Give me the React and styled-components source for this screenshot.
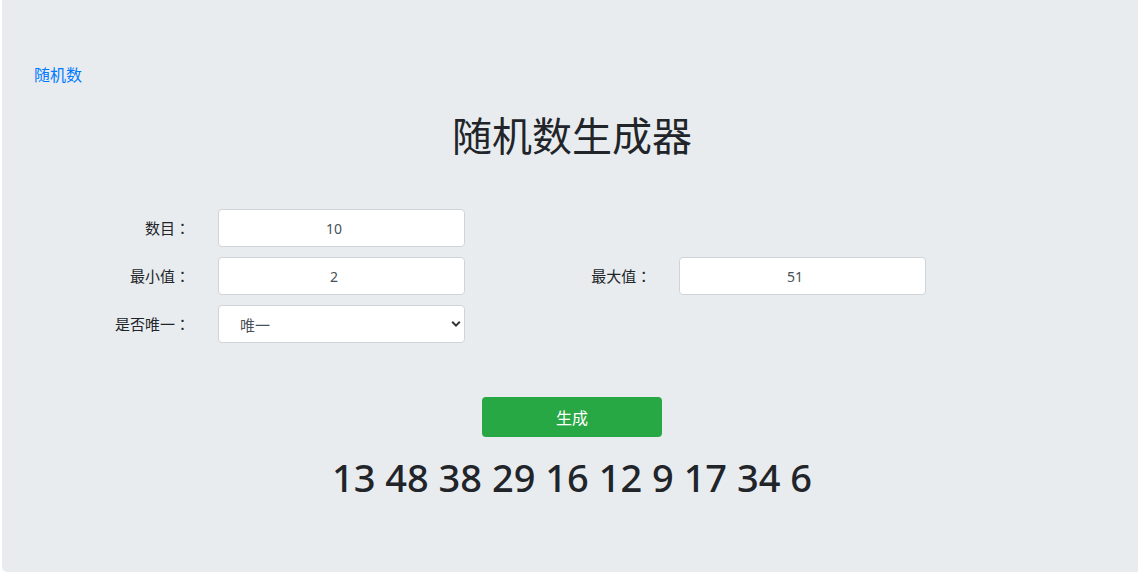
import React, { useState } from "react"
import styled, { createGlobalStyle } from "styled-components"

const GlobalStyle = createGlobalStyle`
  html, body {
    margin: 0;
    padding: 0;
    background: #fff;
    overflow: hidden;
  }
  body {
    font-family: "Noto Sans", "Noto Sans CJK SC", sans-serif;
    color: #212529;
  }
`

const Jumbotron = styled.div`
  margin-left: 2px;
  width: 1136px;
  height: 572px;
  box-sizing: border-box;
  background: #e9ecef;
  border-radius: 0 0 0 5px;
  padding: 62px 12.6px 0 16.6px;
`

const NavLink = styled.a`
  display: inline-block;
  margin-left: 15.4px;
  font-size: 16px;
  line-height: 24px;
  color: #007bff;
  text-decoration: none;
  font-family: "Noto Sans CJK SC", sans-serif;
`

const Title = styled.h1`
  margin: 24px 0 0;
  text-align: center;
  font-family: "Noto Sans CJK SC", sans-serif;
  font-size: 40px;
  font-weight: 400;
  line-height: 48px;
`

const FormGrid = styled.div`
  display: grid;
  grid-template-columns: repeat(12, 1fr);
  row-gap: 10px;
  margin-top: 51px;
`

const Label = styled.label`
  grid-column: ${p => p.$col} / span 2;
  padding: 0 13px 0 15px;
  text-align: right;
  font-family: "Noto Sans CJK SC", sans-serif;
  font-size: 15px;
  line-height: 38px;
  color: #212529;
`

const Colon = styled.span`
  font-family: "Noto Sans CJK TC", sans-serif;
`

const Field = styled.div`
  grid-column: ${p => p.$col} / span 3;
  padding: 0 15px;
  position: relative;
`

const Input = styled.input`
  width: 100%;
  height: 38px;
  box-sizing: border-box;
  border: 1px solid #ced4da;
  border-radius: 4px;
  background: #fff;
  padding: 0 15px 0 0;
  text-align: center;
  font-family: "Noto Sans", sans-serif;
  font-size: 14px;
  color: #495057;
  outline: none;
`

const Select = styled.select`
  width: 100%;
  height: 38px;
  box-sizing: border-box;
  border: 1px solid #ced4da;
  border-radius: 4px;
  background: #fff;
  appearance: none;
  padding: 0 0 0 21px;
  font-family: "Noto Sans CJK SC", sans-serif;
  font-size: 15px;
  color: #495057;
  outline: none;
`

const Chevron = styled.svg`
  position: absolute;
  right: 19px;
  top: 15px;
  pointer-events: none;
`

const Actions = styled.div`
  display: flex;
  flex-direction: column;
  align-items: center;
  margin-top: 54px;
`

const GenerateButton = styled.button`
  width: 180px;
  height: 40px;
  border: none;
  border-radius: 4px;
  background: #28a745;
  color: #fff;
  font-family: "Noto Sans CJK SC", sans-serif;
  font-size: 16px;
  cursor: pointer;
`

const Result = styled.h2`
  margin: 17px 0 0;
  font-family: "Noto Sans", sans-serif;
  font-size: 38px;
  font-weight: 500;
  line-height: 46px;
  text-align: center;
  color: #212529;
`

const App = () => {
  const [count, setCount] = useState("10")
  const [min, setMin] = useState("2")
  const [max, setMax] = useState("51")
  const [unique, setUnique] = useState("1")
  const [result, setResult] = useState([13, 48, 38, 29, 16, 12, 9, 17, 34, 6])

  const generate = () => {
    const n = parseInt(count, 10) || 0
    const lo = parseInt(min, 10) || 0
    const hi = parseInt(max, 10) || 0
    const out = []
    while (out.length < n) {
      const v = lo + Math.floor(Math.random() * (hi - lo + 1))
      if (unique === "1" && out.includes(v) && hi - lo + 1 >= n) continue
      out.push(v)
    }
    setResult(out)
  }

  return (
    <>
      <GlobalStyle />
      <Jumbotron>
        <NavLink href="#">随机数</NavLink>
        <Title>随机数生成器</Title>
        <FormGrid>
          <Label $col={1}>数目<Colon>：</Colon></Label>
          <Field $col={3}>
            <Input value={count} onChange={e => setCount(e.target.value)} />
          </Field>

          <Label $col={1}>最小值<Colon>：</Colon></Label>
          <Field $col={3}>
            <Input value={min} onChange={e => setMin(e.target.value)} />
          </Field>
          <Label $col={6}>最大值<Colon>：</Colon></Label>
          <Field $col={8}>
            <Input value={max} onChange={e => setMax(e.target.value)} />
          </Field>

          <Label $col={1}>是否唯一<Colon>：</Colon></Label>
          <Field $col={3}>
            <Select value={unique} onChange={e => setUnique(e.target.value)}>
              <option value="1">唯一</option>
              <option value="0">不唯一</option>
            </Select>
            <Chevron width="10" height="8" viewBox="0 0 10 8">
              <path d="M1.2 1.8 L5 5.6 L8.8 1.8" fill="none" stroke="#333" strokeWidth="2" />
            </Chevron>
          </Field>
        </FormGrid>
        <Actions>
          <GenerateButton onClick={generate}>生成</GenerateButton>
          <Result>{result.join(" ")}</Result>
        </Actions>
      </Jumbotron>
    </>
  )
}

export default App
